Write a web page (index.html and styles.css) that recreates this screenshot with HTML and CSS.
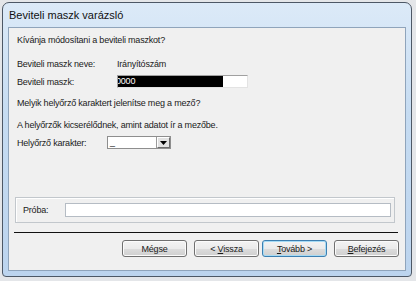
FILE: index.html
```html
<!DOCTYPE html>
<html lang="hu">
<head>
  <meta charset="UTF-8">
  <title>Beviteli maszk varázsló</title>
  <link rel="stylesheet" href="styles.css">
</head>
<body>

<div class="window">
  <div class="titlebar">Beviteli maszk varázsló</div>

  <div class="client">
    <p class="question">Kívánja módosítani a beviteli maszkot?</p>

    <div class="field-row name-row">
      <span class="label">Beviteli maszk neve:</span>
      <span class="value">Irányítószám</span>
    </div>

    <div class="field-row mask-row">
      <span class="label">Beviteli maszk:</span>
      <div class="textbox"><span class="selection">0000</span></div>
    </div>

    <p class="info">Melyik helyőrző karaktert jelenítse meg a mező?</p>
    <p class="info">A helyőrzők kicserélődnek, amint adatot ír a mezőbe.</p>

    <div class="field-row combo-row">
      <span class="label label-short">Helyőrző karakter:</span>
      <div class="combo">
        <span class="combo-value">_</span>
        <span class="combo-btn">
          <svg width="7" height="4" viewBox="0 0 7 4"><path d="M0 0h7L3.5 4z" fill="#000"/></svg>
        </span>
      </div>
    </div>

    <!-- Próba mező -->
    <div class="test-group">
      <span class="test-label">Próba:</span>
      <div class="test-input"></div>
    </div>

    <div class="separator"></div>

    <div class="buttons">
      <button class="btn">Mégse</button>
      <button class="btn btn-back">&lt; <u>V</u>issza</button>
      <button class="btn btn-default"><u>T</u>ovább &gt;</button>
      <button class="btn btn-finish"><u>B</u>efejezés</button>
    </div>
  </div>
</div>

</body>
</html>
```

FILE: styles.css
```css
body {
  margin: 0;
  background-color: #e4e6e9;
  font-family: "Liberation Sans", Arial, sans-serif;
  font-size: 9px;
  letter-spacing: -0.2px;
  color: #1a1a1a;
}

p {
  margin: 0;
}

/* Ablak keret */
.window {
  box-sizing: border-box;
  width: 410px;
  height: 275px;
  margin: 2px 0 0 2px;
  padding: 0 5px 5px;
  border: 1px solid #4d5866;
  border-radius: 7px 7px 4px 4px;
  background: linear-gradient(#dceaf8, #c6dcf2 40%, #bcd4ee);
}

.titlebar {
  height: 24px;
  line-height: 24px;
  padding-left: 1px;
  font-size: 11px;
  letter-spacing: 0;
  color: #111;
}

.client {
  box-sizing: border-box;
  height: 244px;
  border: 1px solid #8fa4bb;
  background-color: #f0f0f0;
}

.question {
  margin: 6px 0 0 8px;
  line-height: 13px;
}

.info {
  margin: 9px 0 0 8px;
  line-height: 13px;
}

.field-row {
  display: flex;
  align-items: center;
  height: 13px;
  margin-left: 8px;
}

.name-row {
  margin-top: 10px;
}

.mask-row {
  margin-top: 5px;
}

.combo-row {
  margin-top: 4px;
}

.label {
  width: 100px;
  flex-shrink: 0;
}

.label-short {
  width: 90px;
}

.textbox {
  box-sizing: border-box;
  width: 131px;
  height: 13px;
  border: 1px solid #a0a0a0;
  border-right-color: #e3e3e3;
  border-bottom-color: #e3e3e3;
  background-color: #fff;
  overflow: hidden;
}

.selection {
  display: block;
  width: 105px;
  height: 11px;
  line-height: 11px;
  background-color: #000;
  color: #fff;
  text-indent: -2px;
}

.combo {
  box-sizing: border-box;
  display: flex;
  width: 64px;
  height: 13px;
  border: 1px solid #8e8e8e;
  background-color: #fff;
}

.combo-value {
  flex: 1;
  padding-left: 2px;
  line-height: 10px;
}

.combo-btn {
  box-sizing: border-box;
  display: flex;
  align-items: center;
  justify-content: center;
  width: 13px;
  height: 11px;
  border: 1px solid #fff;
  border-right-color: #6d6d6d;
  border-bottom-color: #6d6d6d;
  background-color: #e2e2e2;
  box-shadow: -1px 0 0 #9a9a9a;
}

/* Grupo de prueba */
.test-group {
  box-sizing: border-box;
  display: flex;
  align-items: center;
  width: 380px;
  height: 26px;
  margin: 48px 0 0 6px;
  padding: 0 3px 0 7px;
  border: 1px solid #c2c7cc;
  box-shadow: inset 1px 1px 0 #fff;
}

.test-label {
  width: 42px;
  flex-shrink: 0;
}

.test-input {
  flex: 1;
  height: 14px;
  box-sizing: border-box;
  border: 1px solid #b5bcc4;
  background-color: #fff;
}

.separator {
  height: 1px;
  margin: 9px 7px 0 5px;
  background-color: #111;
}

.buttons {
  display: flex;
  justify-content: flex-end;
  margin-top: 7px;
  padding-right: 6px;
}

.btn {
  box-sizing: border-box;
  width: 65px;
  height: 17px;
  margin-left: 7px;
  padding: 0;
  border: 1px solid #707070;
  border-radius: 3px;
  background: linear-gradient(#f3f3f3, #ebebeb 50%, #dddddd 51%, #cfcfcf);
  font-family: inherit;
  font-size: 9px;
  letter-spacing: -0.2px;
  color: #1a1a1a;
  box-shadow: inset 0 0 0 1px #fbfbfb;
}

.btn-default {
  margin-left: 3px;
  border-color: #3c7fb1;
  box-shadow: inset 0 0 0 1px #a6dbf5;
}
```
